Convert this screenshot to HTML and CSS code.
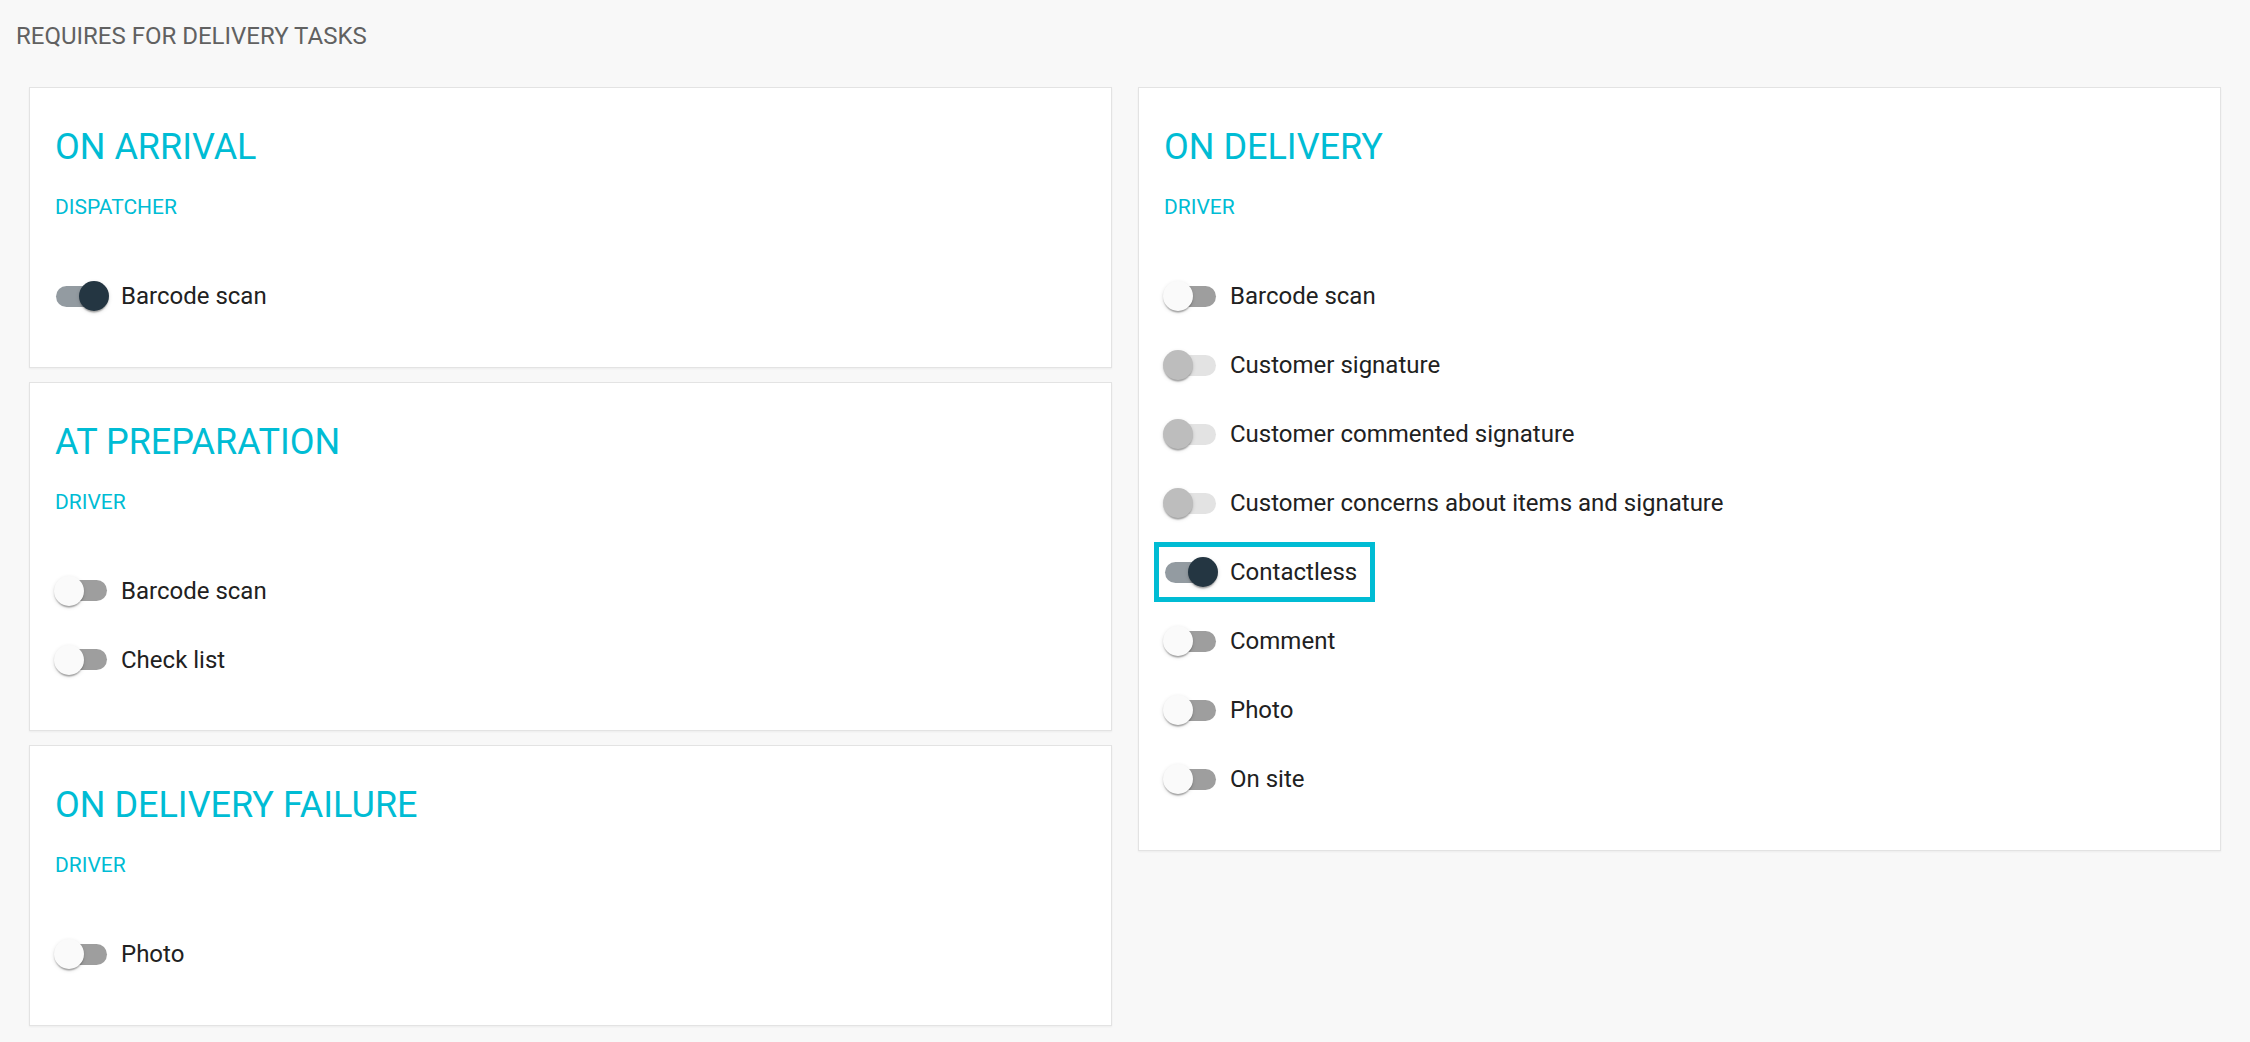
FILE: index.html
```html
<!DOCTYPE html>
<html lang="en">
<head>
<meta charset="utf-8">
<title>Requires for delivery tasks</title>
<link rel="stylesheet" href="styles.css">
</head>
<body>
<div class="page">
  <h1 class="page-title">REQUIRES FOR DELIVERY TASKS</h1>
  <div class="columns">
    <div class="column">
      <section class="card">
        <h2 class="card-title">ON ARRIVAL</h2>
        <div class="card-role">DISPATCHER</div>
        <div class="options">
          <div class="row"><label class="option"><span class="switch on"><span class="track"></span><span class="thumb"></span></span><span class="option-text">Barcode scan</span></label></div>
        </div>
      </section>
      <section class="card">
        <h2 class="card-title">AT PREPARATION</h2>
        <div class="card-role">DRIVER</div>
        <div class="options">
          <div class="row"><label class="option"><span class="switch"><span class="track"></span><span class="thumb"></span></span><span class="option-text">Barcode scan</span></label></div>
          <div class="row"><label class="option"><span class="switch"><span class="track"></span><span class="thumb"></span></span><span class="option-text">Check list</span></label></div>
        </div>
      </section>
      <section class="card">
        <h2 class="card-title">ON DELIVERY FAILURE</h2>
        <div class="card-role">DRIVER</div>
        <div class="options">
          <div class="row"><label class="option"><span class="switch"><span class="track"></span><span class="thumb"></span></span><span class="option-text">Photo</span></label></div>
        </div>
      </section>
    </div>
    <div class="column">
      <section class="card">
        <h2 class="card-title">ON DELIVERY</h2>
        <div class="card-role">DRIVER</div>
        <div class="options">
          <div class="row"><label class="option"><span class="switch"><span class="track"></span><span class="thumb"></span></span><span class="option-text">Barcode scan</span></label></div>
          <div class="row"><label class="option"><span class="switch disabled"><span class="track"></span><span class="thumb"></span></span><span class="option-text">Customer signature</span></label></div>
          <div class="row"><label class="option"><span class="switch disabled"><span class="track"></span><span class="thumb"></span></span><span class="option-text">Customer commented signature</span></label></div>
          <div class="row"><label class="option"><span class="switch disabled"><span class="track"></span><span class="thumb"></span></span><span class="option-text">Customer concerns about items and signature</span></label></div>
          <div class="row"><label class="option highlight"><span class="switch on"><span class="track"></span><span class="thumb"></span></span><span class="option-text">Contactless</span></label></div>
          <div class="row"><label class="option"><span class="switch"><span class="track"></span><span class="thumb"></span></span><span class="option-text">Comment</span></label></div>
          <div class="row"><label class="option"><span class="switch"><span class="track"></span><span class="thumb"></span></span><span class="option-text">Photo</span></label></div>
          <div class="row"><label class="option"><span class="switch"><span class="track"></span><span class="thumb"></span></span><span class="option-text">On site</span></label></div>
        </div>
      </section>
    </div>
  </div>
</div>
</body>
</html>
```
FILE: styles.css
```css
html, body {
  margin: 0;
  padding: 0;
}

body {
  background: #f8f8f8;
  font-family: Roboto, "Noto Sans", "Liberation Sans", sans-serif;
  color: #212121;
}

.page {
  min-height: 1042px;
  box-sizing: border-box;
}

.page-title {
  margin: 0;
  padding: 22px 16px 0;
  font-size: 24px;
  line-height: 28px;
  font-weight: 400;
  color: #616161;
}

.columns {
  display: grid;
  grid-template-columns: 1fr 1fr;
  column-gap: 26px;
  padding: 37px 29px 0;
  align-items: start;
}

.column {
  display: flex;
  flex-direction: column;
  gap: 14px;
}

.card {
  background: #ffffff;
  border: 1px solid #e3e3e3;
  box-shadow: 0 1px 2px rgba(0, 0, 0, 0.05);
  padding: 24px 25px 36px;
}

.card-title {
  margin: 14px 0 0;
  font-size: 36px;
  line-height: 43px;
  font-weight: 400;
  color: #00bcd4;
}

.card-role {
  margin-top: 26px;
  font-size: 21px;
  line-height: 24px;
  color: #00bcd4;
}

.options {
  margin-top: 42.5px;
  display: flex;
  flex-direction: column;
}

.row {
  height: 69px;
  display: flex;
  align-items: center;
}

.option {
  display: inline-flex;
  align-items: center;
  height: 50px;
  margin-left: -5px;
  padding: 0 13px 0 4px;
  font-size: 24px;
  line-height: 28px;
  color: #212121;
  cursor: pointer;
}

.option.highlight {
  outline: 5px solid #00bcd4;
}

.switch {
  position: relative;
  flex: none;
  width: 55px;
  height: 30px;
  margin-right: 12px;
}

.track {
  position: absolute;
  left: 2px;
  top: 4.5px;
  width: 51px;
  height: 21px;
  border-radius: 10.5px;
  background: #9e9e9e;
}

.thumb {
  position: absolute;
  left: 0;
  top: 0;
  width: 30px;
  height: 30px;
  border-radius: 50%;
  background: #fafafa;
  box-shadow: 0 3px 1.5px -1.5px rgba(0, 0, 0, 0.2), 0 1.5px 1.5px 0 rgba(0, 0, 0, 0.14), 0 1.5px 4.5px 0 rgba(0, 0, 0, 0.12);
}

.switch.on .thumb {
  left: 25px;
  background: #243642;
}

.switch.on .track {
  background: #939ba1;
}

.switch.disabled .thumb {
  background: #bdbdbd;
}

.switch.disabled .track {
  background: #e3e3e3;
}
```
